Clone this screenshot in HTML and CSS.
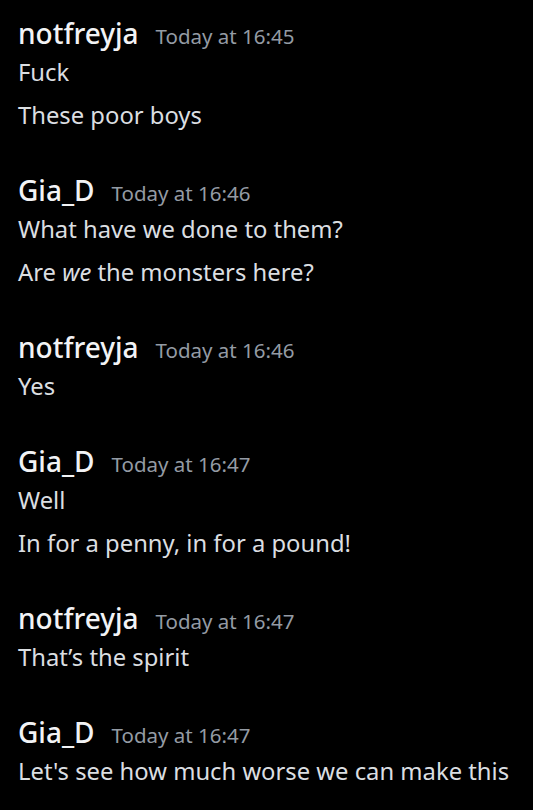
FILE: index.html
```html
<!DOCTYPE html>
<html lang="en">
<head>
    <meta charset="UTF-8">
    <meta name="viewport" content="width=device-width, initial-scale=1.0">
    <title>Chat</title>
    <link rel="stylesheet" href="styles.css">
</head>
<body>

    <div class="chat">
        <div class="group">
            <div class="header"><span class="name">notfreyja</span><span class="time">Today at 16:45</span></div>
            <p class="msg">Fuck</p>
            <p class="msg">These poor boys</p>
        </div>

        <div class="group">
            <div class="header"><span class="name">Gia_D</span><span class="time">Today at 16:46</span></div>
            <p class="msg">What have we done to them?</p>
            <p class="msg">Are <em>we</em> the monsters here?</p>
        </div>

        <div class="group">
            <div class="header"><span class="name">notfreyja</span><span class="time">Today at 16:46</span></div>
            <p class="msg">Yes</p>
        </div>

        <div class="group">
            <div class="header"><span class="name">Gia_D</span><span class="time">Today at 16:47</span></div>
            <p class="msg">Well</p>
            <p class="msg">In for a penny, in for a pound!</p>
        </div>

        <div class="group">
            <div class="header"><span class="name">notfreyja</span><span class="time">Today at 16:47</span></div>
            <p class="msg">That’s the spirit</p>
        </div>

        <div class="group">
            <div class="header"><span class="name">Gia_D</span><span class="time">Today at 16:47</span></div>
            <p class="msg">Let's see how much worse we can make this</p>
        </div>
    </div>

</body>
</html>
```

FILE: styles.css
```css
body {
    margin: 0;
    background-color: black;
    font-family: "Noto Sans", Arial, sans-serif;
}

.chat {
    padding: 18px 18px 0 18px;
}

.group {
    margin-bottom: 42px;
}

.header {
    display: flex;
    align-items: baseline;
    gap: 17px;
    height: 36px;
    line-height: 30px;
}

.name {
    color: #f2f3f5;
    font-size: 28px;
    font-weight: 500;
}

.time {
    color: #949ba4;
    font-size: 20.5px;
}

.msg {
    margin: 0;
    color: #dbdee1;
    font-size: 23.8px;
    line-height: 36px;
}

.msg + .msg {
    margin-top: 7px;
}
```
